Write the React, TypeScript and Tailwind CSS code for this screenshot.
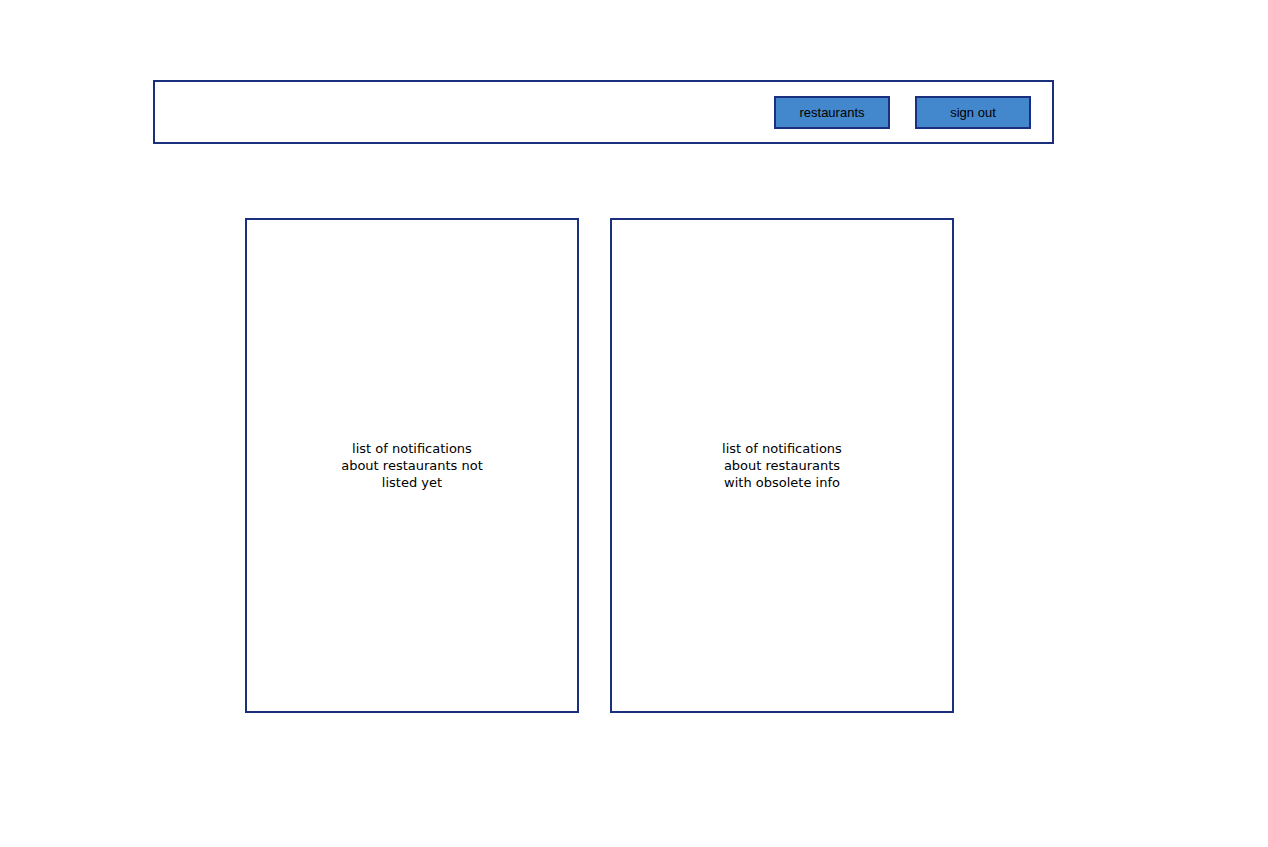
import React from 'react';

const NavButton: React.FC<{ label: string }> = ({ label }) => (
  <button className="w-[116px] h-[33px] pt-px bg-[#4387cd] border-2 border-[#1b2f7f] text-[13px] text-black font-['Liberation_Sans',Arial,sans-serif] flex items-center justify-center">
    {label}
  </button>
);

const Panel: React.FC<{ width: string; lines: string[] }> = ({ width, lines }) => (
  <div className={`${width} h-[495px] border-2 border-[#1b2f7f] flex items-center justify-center`}>
    <p className="text-[13px] leading-[17px] text-black text-center font-['DejaVu_Sans',sans-serif]">
      {lines.map((l) => (
        <span key={l} className="block">
          {l}
        </span>
      ))}
    </p>
  </div>
);

export default function App() {
  return (
    <div className="min-h-[847px] bg-white pt-[80px]">
      <header className="ml-[153px] w-[901px] h-[64px] border-2 border-[#1b2f7f] flex items-center justify-end gap-[25px] pr-[21px]">
        <NavButton label="restaurants" />
        <NavButton label="sign out" />
      </header>

      <main className="mt-[74px] ml-[245px] flex gap-[31px]">
        <Panel width="w-[334px]" lines={['list of notifications', 'about restaurants not', 'listed yet']} />
        <Panel width="w-[344px]" lines={['list of notifications', 'about restaurants', 'with obsolete info']} />
      </main>
    </div>
  );
}
